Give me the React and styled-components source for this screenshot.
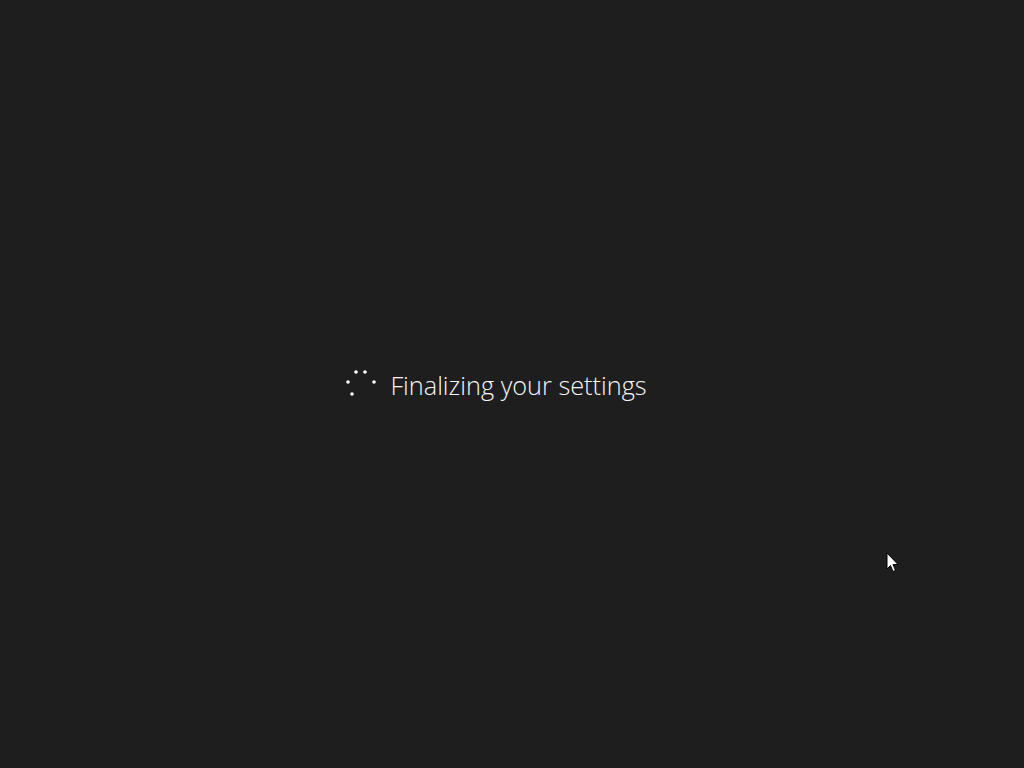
import styled, { createGlobalStyle } from 'styled-components'

const GlobalStyle = createGlobalStyle`
  html, body {
    margin: 0;
    padding: 0;
    background: #1e1e1e;
  }
`

const Screen = styled.div`
  width: 1024px;
  height: 768px;
  background: #1e1e1e;
  position: relative;
  display: flex;
  align-items: center;
  justify-content: center;
  padding-right: 32px;
  padding-top: 4px;
  box-sizing: border-box;
  overflow: hidden;
`

const Status = styled.div`
  display: flex;
  align-items: center;
  gap: 14px;
`

const Spinner = styled.svg`
  width: 31px;
  height: 30px;
  display: block;
  margin-top: -4px;
`

const Message = styled.span`
  color: #f6f6f6;
  font-family: 'Open Sans', 'Noto Sans', sans-serif;
  font-weight: 300;
  font-size: 25.3px;
  line-height: 1;
`

const Cursor = styled.svg`
  position: absolute;
  left: 886px;
  top: 552px;
  width: 14px;
  height: 22px;
`

const dots = [
  [7, 25],
  [3, 13],
  [11, 3],
  [20, 3],
  [29, 13],
]

function App() {
  return (
    <>
      <GlobalStyle />
      <Screen>
        <Status>
          <Spinner viewBox="0 0 31 30">
            {dots.map(([x, y], i) => (
              <circle key={i} cx={x} cy={y} r="1.8" fill="#ffffff" />
            ))}
          </Spinner>
          <Message>Finalizing your settings</Message>
        </Status>
        <Cursor viewBox="0 0 14 22">
          <path
            d="M1 1 L1 17 L4.5 13.5 L7 19.5 L9.5 18.5 L7 12.5 L12 12.5 Z"
            fill="#ffffff"
            stroke="#000000"
            strokeWidth="1"
          />
        </Cursor>
      </Screen>
    </>
  )
}

export default App
